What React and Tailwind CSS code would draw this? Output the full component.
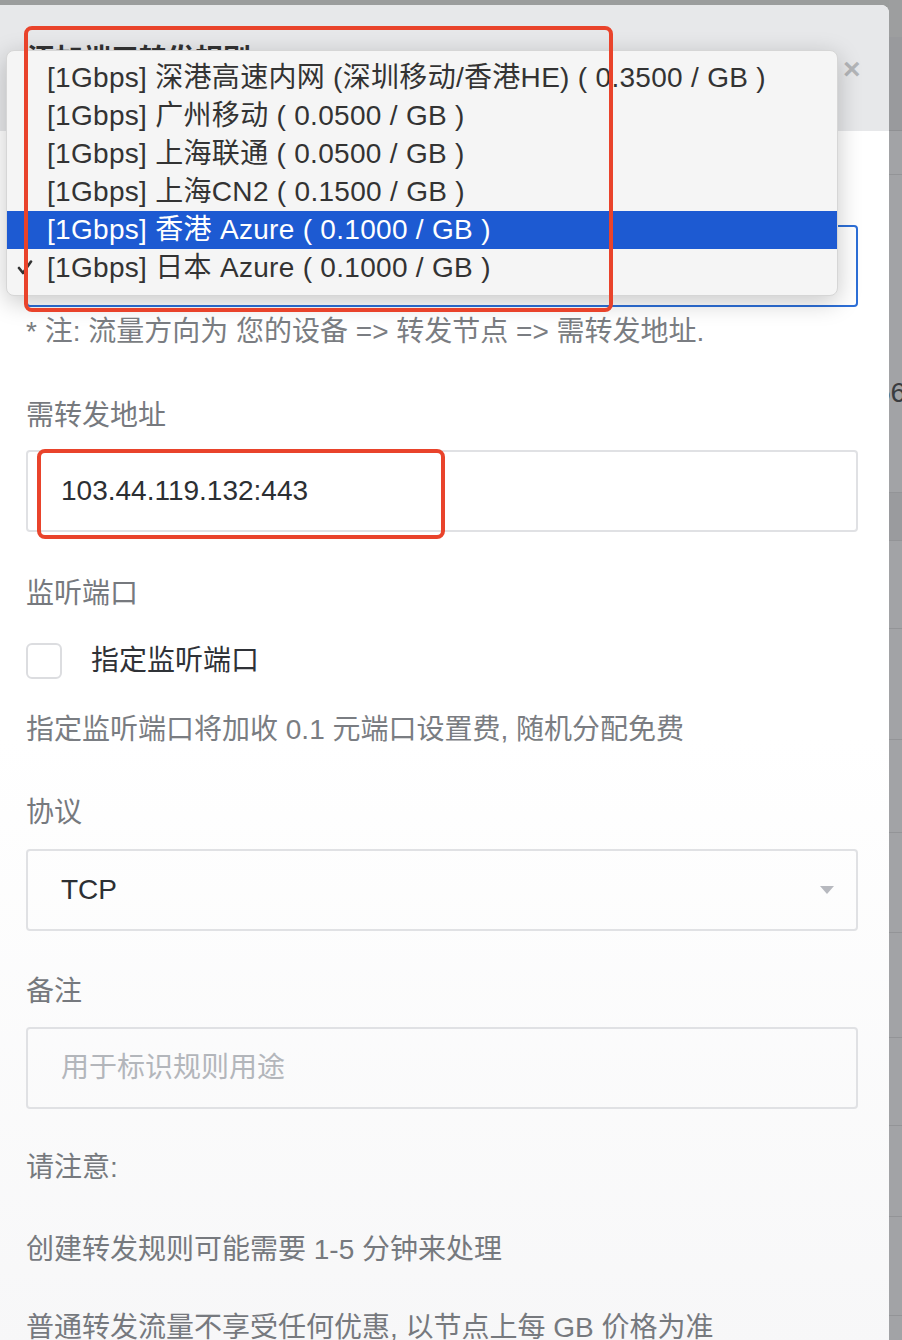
const FONT = { fontFamily: '"Liberation Sans", "Noto Sans CJK SC", sans-serif' };

const options = [
  "[1Gbps] 深港高速内网 (深圳移动/香港HE) ( 0.3500 / GB )",
  "[1Gbps] 广州移动 ( 0.0500 / GB )",
  "[1Gbps] 上海联通 ( 0.0500 / GB )",
  "[1Gbps] 上海CN2 ( 0.1500 / GB )",
  "[1Gbps] 香港 Azure ( 0.1000 / GB )",
  "[1Gbps] 日本 Azure ( 0.1000 / GB )",
];

function Label({ children, className = "" }) {
  return <div className={`h-10 leading-10 text-[28px] text-[#76797e] ${className}`}>{children}</div>;
}

function Dropdown() {
  return (
    <div className="absolute left-[6px] top-[50px] w-[832px] rounded-lg bg-[#f5f5f5] py-2 shadow-[0_6px_24px_rgba(0,0,0,0.22)] border border-[#d6d6d6]">
      {options.map((opt, i) => {
        const active = i === 4;
        const checked = i === 5;
        return (
          <div
            key={opt}
            className={`relative h-[38px] leading-[38px] pl-[40px] text-[28px] tracking-[0.3px] whitespace-nowrap ${
              active ? "bg-[#1d5ad2] text-white" : "text-[#333333]"
            }`}
          >
            {checked && (
              <svg className="absolute left-[10px] top-[11px]" width="16" height="15" viewBox="0 0 16 15">
                <path d="M2 8 L6 13 L14 1.5" fill="none" stroke="#333" strokeWidth="2.6" strokeLinecap="round" strokeLinejoin="round" />
              </svg>
            )}
            {opt}
          </div>
        );
      })}
    </div>
  );
}

function SideStrip() {
  return (
    <div className="w-[13px] h-full overflow-hidden bg-[#a2a3a6] flex flex-col">
      <div className="h-[37px] shrink-0 bg-[#9d9e9f]" />
      <div className="h-[94px] shrink-0 bg-[#999a9d] border-b border-[#8f9093]" />
      <div className="h-[44px] shrink-0 border-b border-[#939497]" />
      <div className="h-[318px] shrink-0 border-b border-[#939497] relative">
        <span className="absolute left-[-14px] top-[197px] text-[28px] text-[#3a3c40]">56</span>
      </div>
      <div className="h-[48px] shrink-0 bg-[#9a9b9e] border-b border-[#939497]" />
      <div className="h-[88px] shrink-0 border-b border-[#939497]" />
      <div className="h-[111px] shrink-0 border-b border-[#939497]" />
      <div className="h-[93px] shrink-0 border-b border-[#939497]" />
      <div className="h-[100px] shrink-0 border-b border-[#939497]" />
      <div className="h-[105px] shrink-0 border-b border-[#939497]" />
      <div className="h-[88px] shrink-0 border-b border-[#939497]" />
      <div className="h-[91px] shrink-0 border-b border-[#939497]" />
      <div className="h-[99px] shrink-0 border-b border-[#939497]" />
    </div>
  );
}

export default function App() {
  return (
    <div style={FONT} className="relative w-[902px] h-[1340px] overflow-hidden bg-[#9b9d9d]">
      <div className="flex h-full">
        {/* modal */}
        <div className="w-[889px] mt-[5px] flex flex-col bg-white rounded-tr-lg overflow-hidden">
          <div className="h-[126px] shrink-0 bg-[#e7e8ea] relative">
            <div className="absolute left-[27px] top-[35px] h-10 leading-10 text-[28px] font-bold text-[#333]">
              添加端口转发规则
            </div>
            <div className="absolute left-[843px] top-[41px] text-[30px] font-bold text-[#b3b5b8]">×</div>
          </div>

          <div className="flex flex-col px-[26px] pr-[31px] pt-[40px] bg-gradient-to-b from-white via-white to-[#f7f7f8] flex-1">
            <Label>转发节点</Label>
            <div className="mt-[14px] h-[82px] rounded border-2 border-[#2d6fd7] flex items-center px-[33px] text-[28px] text-[#2c2f33]">
              [1Gbps] 日本 Azure ( 0.1000 / GB )
            </div>
            <div className="mt-[5px] h-10 leading-10 text-[28px] text-[#7a7d82] whitespace-nowrap">
              * 注: 流量方向为 您的设备 =&gt; 转发节点 =&gt; 需转发地址.
            </div>

            <Label className="mt-[44px]">需转发地址</Label>
            <div className="mt-[14px] h-[82px] rounded border-2 border-[#e0e1e4] flex items-center px-[33px] text-[28px] text-[#2c2f33]">
              103.44.119.132:443
            </div>

            <Label className="mt-[42px]">监听端口</Label>
            <div className="mt-[27px] h-10 flex items-center gap-[29px]">
              <div className="w-9 h-9 rounded-md border-2 border-[#dcdde0] bg-white" />
              <span className="text-[28px] text-[#2f3237]">指定监听端口</span>
            </div>
            <div className="mt-[29px] h-10 leading-10 text-[28px] text-[#7a7d82]">
              指定监听端口将加收 0.1 元端口设置费, 随机分配免费
            </div>

            <Label className="mt-[43px]">协议</Label>
            <div className="mt-[16px] h-[82px] rounded border-2 border-[#e0e1e4] flex items-center justify-between px-[33px] pr-[22px] text-[28px] text-[#2c2f33]">
              <span>TCP</span>
              <svg width="14" height="8" viewBox="0 0 14 8">
                <path d="M0 0 H14 L7 8 Z" fill="#b7b9bf" />
              </svg>
            </div>

            <Label className="mt-[41px]">备注</Label>
            <div className="mt-[15px] h-[82px] rounded border-2 border-[#e0e1e4] flex items-center px-[33px] text-[28px] text-[#b3b6bb]">
              用于标识规则用途
            </div>

            <Label className="mt-[39px]">请注意:</Label>
            <Label className="mt-[42px]">创建转发规则可能需要 1-5 分钟来处理</Label>
            <Label className="mt-[38px] whitespace-nowrap">普通转发流量不享受任何优惠, 以节点上每 GB 价格为准</Label>
          </div>
        </div>
        <SideStrip />
      </div>

      <Dropdown />

      {/* annotation boxes */}
      <div className="absolute left-[24px] top-[26px] w-[589px] h-[286px] border-4 border-[#e9432b] rounded-lg" />
      <div className="absolute left-[37px] top-[449px] w-[408px] h-[90px] border-4 border-[#e9432b] rounded-lg" />
    </div>
  );
}
